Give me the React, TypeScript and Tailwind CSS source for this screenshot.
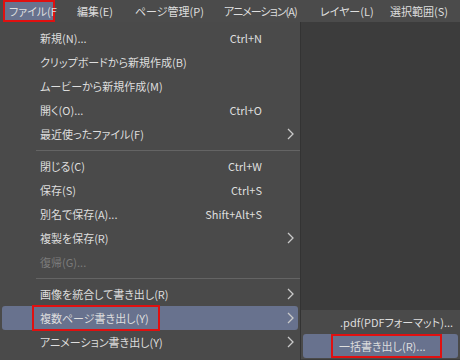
import React from "react";

type Item =
  | { sep: true }
  | { label: string; shortcut?: string; sub?: boolean; disabled?: boolean; active?: boolean; marked?: boolean };

const ITEMS: Item[] = [
  { label: "新規(N)...", shortcut: "Ctrl+N" },
  { label: "クリップボードから新規作成(B)" },
  { label: "ムービーから新規作成(M)" },
  { label: "開く(O)...", shortcut: "Ctrl+O" },
  { label: "最近使ったファイル(F)", sub: true },
  { sep: true },
  { label: "閉じる(C)", shortcut: "Ctrl+W" },
  { label: "保存(S)", shortcut: "Ctrl+S" },
  { label: "別名で保存(A)...", shortcut: "Shift+Alt+S" },
  { label: "複製を保存(R)", sub: true },
  { label: "復帰(G)...", disabled: true },
  { sep: true },
  { label: "画像を統合して書き出し(R)", sub: true },
  { label: "複数ページ書き出し(Y)", sub: true, active: true, marked: true },
  { label: "アニメーション書き出し(Y)", sub: true },
];

function Chevron() {
  return (
    <svg width="7" height="12" viewBox="0 0 7 12" fill="none">
      <polyline points="1,1 6,6 1,11" stroke="#c9c9c9" strokeWidth="1.3" />
    </svg>
  );
}

export default function App() {
  return (
    <div className="flex h-[360px] w-[460px] flex-col overflow-hidden bg-[#3c3c3c] font-['Noto_Sans_CJK_JP','Noto_Sans',sans-serif] text-[11px] text-[#dedede] [font-feature-settings:'palt']">
      <div className="flex h-[22px] shrink-0 items-center whitespace-nowrap bg-[#4b4b4b]">
        <div className="ml-[3px] flex h-[22px] w-[52px] items-center border-2 border-[#e01010] bg-[#68728e] pl-[4px]">
          ファイル(F
        </div>
        <div className="w-[80px] pl-[22px]">編集(E)</div>
        <div className="w-[89px]">ページ管理(P)</div>
        <div className="w-[96px] tracking-[-1px]">アニメーション(A)</div>
        <div className="w-[70px]">レイヤー(L)</div>
        <div>選択範囲(S)</div>
      </div>

      <div className="relative flex-1">
        <div className="absolute left-0 top-0 w-[301px] border-r border-[#333333] bg-[#4a4a4a] pt-[4px] pb-[6px]">
          {ITEMS.map((it, i) =>
            "sep" in it ? (
              <div key={i} className="flex h-[8px] items-center pl-[36px]">
                <div className="h-px w-full bg-[#646464]" />
              </div>
            ) : (
              <div
                key={i}
                className={`mx-[2px] flex h-[24px] items-center rounded-[3px] pl-[38px] ${it.active ? "bg-[#68728e]" : ""} ${it.disabled ? "text-[#7c7c7c]" : ""}`}
              >
                <span className="flex-1 whitespace-nowrap">
                  {it.marked ? (
                    <span className="-ml-[8px] inline-flex h-[26px] w-[128px] items-center border-2 border-[#e01010] pl-[6px]">{it.label}</span>
                  ) : (
                    it.label
                  )}
                </span>
                <span className="whitespace-nowrap text-right">{it.shortcut}</span>
                <span className="flex w-[36px] justify-end pr-[4px]">{it.sub ? <Chevron /> : null}</span>
              </div>
            )
          )}
        </div>

        <div className="absolute left-[301px] top-[288px] w-[159px] bg-[#4a4a4a] py-[1px]">
          <div className="flex h-[23px] items-center whitespace-nowrap pl-[39px]">.pdf(PDFフォーマット)...</div>
          <div className="mx-[2px] flex h-[24px] items-center rounded-[3px] bg-[#68728e]">
            <span className="ml-[28px] inline-flex h-[24px] w-[111px] items-center whitespace-nowrap border-2 border-[#e01010] pl-[6px]">
              一括書き出し(R)...
            </span>
          </div>
        </div>
      </div>
    </div>
  );
}
